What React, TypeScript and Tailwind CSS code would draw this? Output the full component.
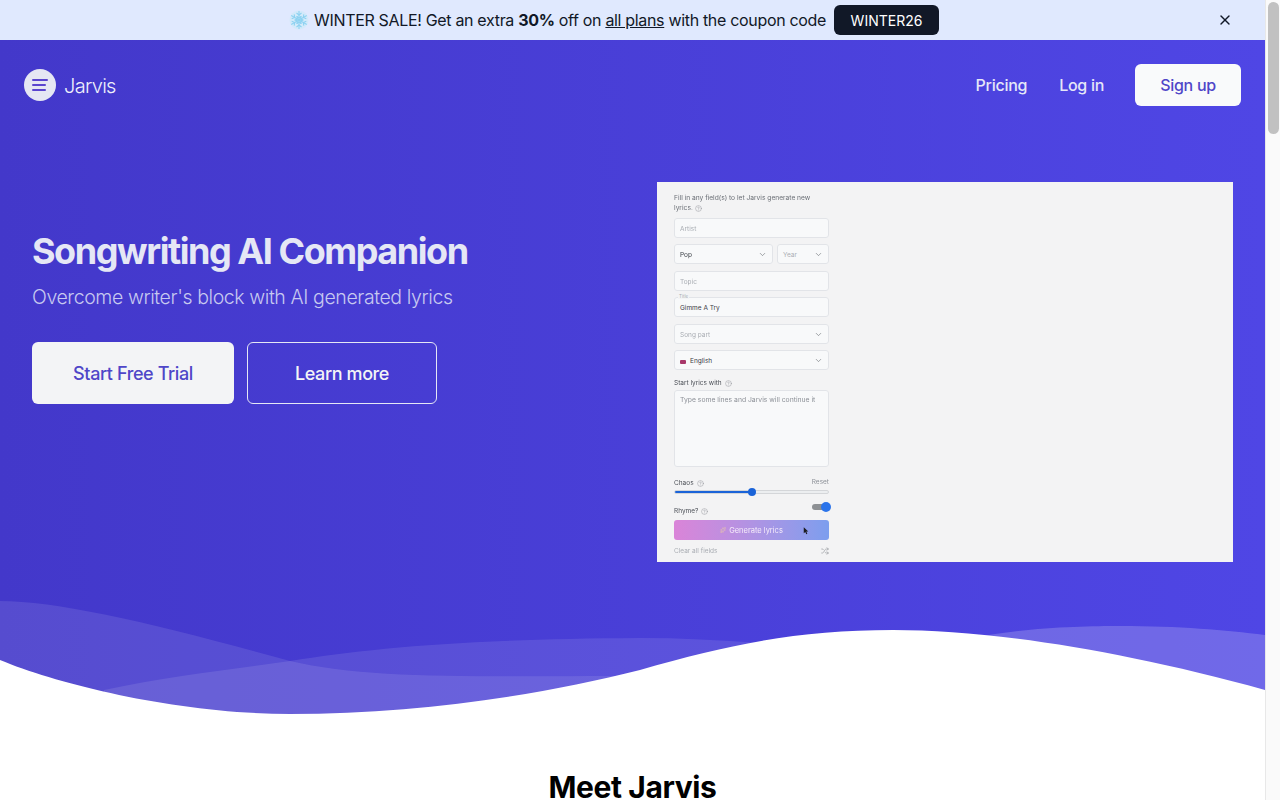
import { ChevronDown, CircleHelp, Shuffle, Sparkles, X } from "lucide-react";

const INTER = "font-['Inter',sans-serif]";

function Snowflake() {
  const arms = [0, 60, 120, 180, 240, 300];
  return (
    <svg width="20" height="20" viewBox="0 0 20 20" className="shrink-0">
      <circle cx="10" cy="10" r="9.5" fill="#cdeaf8" opacity="0.7" />
      {arms.map((a) => (
        <g key={a} transform={`rotate(${a} 10 10)`} stroke="#8dd2f1" strokeWidth="1.1" fill="none">
          <path d="M10 10V1" />
          <path d="M7.5 3 10 5l2.5-2" />
          <path d="M7.5 6.5 10 8l2.5-1.500" />
        </g>
      ))}
    </svg>
  );
}

function Help() {
  return <CircleHelp className="inline-block h-[7px] w-[7px] text-[#8b8f96]" strokeWidth={1.5} />;
}

function Field(props: { text: string; muted?: boolean; chevron?: boolean; className?: string }) {
  return (
    <div
      className={`flex h-5 items-center justify-between rounded-[3px] border border-[#e2e4e8] bg-[#f8f9fa] px-[5px] text-[6.500px] ${
        props.muted ? "text-[#a9adb3]" : "text-[#3c4047]"
      } ${props.className ?? ""}`}
    >
      <span className="mt-[4px]">{props.text}</span>
      {props.chevron && <ChevronDown className="h-[9px] w-[9px] text-[#5f6369]" strokeWidth={1.5} />}
    </div>
  );
}

function LyricsForm() {
  return (
    <div className="flex h-[380px] w-[576px] shrink-0 flex-col bg-[#f3f3f4] pl-[17px] pt-[11px]">
      <div className="flex w-[155px] flex-col blur-[0.3px]">
        <p className="w-[145px] text-[6.650px] leading-[10px] text-[#6b6f76]">
          Fill in any field(s) to let Jarvis generate new lyrics. <Help />
        </p>
        <Field text="Artist" muted className="mt-[5px]" />
        <div className="mt-[6px] flex gap-1">
          <Field text="Pop" chevron className="w-[99px]" />
          <Field text="Year" muted chevron className="flex-1" />
        </div>
        <Field text="Topic" muted className="mt-[7px]" />
        <div className="relative mt-[6px]">
          <span className="absolute left-[4px] top-[-3px] bg-[#f3f4f5] px-[1px] text-[4.500px] leading-[5px] text-[#a9adb3]">
            Title
          </span>
          <Field text="Gimme A Try" />
        </div>
        <Field text="Song part" muted chevron className="mt-[7px]" />
        <div className="mt-[6px] flex h-5 items-center justify-between rounded-[3px] border border-[#e2e4e8] bg-[#f8f9fa] px-[5px] text-[6.500px] text-[#3c4047]">
          <span className="mt-[3px] flex items-center gap-[4px]">
            <span className="h-[4px] w-[6px] rounded-[1px] bg-[#a8386a]" />
            English
          </span>
          <ChevronDown className="h-[9px] w-[9px] text-[#5f6369]" strokeWidth={1.5} />
        </div>
        <p className="mt-[8px] flex items-center gap-[3px] text-[6.500px] leading-[10px] text-[#4b4f56]">
          Start lyrics with <Help />
        </p>
        <div className="mt-[2px] h-[77px] rounded-[3px] border border-[#e2e4e8] bg-[#f8f9fa] px-[5px] pt-[4px] text-[6.800px] leading-[10px] text-[#8d9198]">
          Type some lines and Jarvis will continue it
        </div>
        <div className="mt-[10px] flex items-start justify-between text-[6.500px] leading-[10px]">
          <span className="mt-[1px] flex items-center gap-[3px] text-[#4b4f56]">
            Chaos <Help />
          </span>
          <span className="text-[#8d9198]">Reset</span>
        </div>
        <div className="relative mt-[2px] h-[4px] rounded-full border border-[#d4d6d9] bg-[#eceef0]">
          <div className="h-full w-1/2 rounded-full bg-[#1a63d8]" />
          <div className="absolute left-[73px] top-[-3px] h-2 w-2 rounded-full bg-[#1a63d8]" />
        </div>
        <div className="mt-[10px] flex h-[16px] items-start justify-between text-[6.500px] leading-[10px]">
          <span className="mt-[2px] flex items-center gap-[3px] text-[#4b4f56]">
            Rhyme? <Help />
          </span>
          <div className="relative mr-[1px] h-[6px] w-[16px] rounded-full bg-[#8d9094]">
            <div className="absolute right-[-3px] top-[-2px] h-[10px] w-[10px] rounded-full bg-[#2b74ea]" />
          </div>
        </div>
        <div className="relative flex h-5 items-center justify-center gap-[3px] rounded-[3px] bg-gradient-to-r from-[#da84d8] to-[#7c9eee] text-[7.500px] text-[#f6ecfa]">
          <Sparkles className="h-[6px] w-[6px] text-[#f3d9a0]" strokeWidth={1.5} />
          <span className="mt-[2px]">Generate lyrics</span>
          <svg viewBox="0 0 8 10" className="absolute left-[129px] top-[7px] h-[8px] w-[6px]">
            <path d="M1 0v8l2-1.800 1.500 3 1.300-.600L4.400 5.800H7z" fill="#1b1b1f" />
          </svg>
        </div>
        <div className="mt-[6px] flex items-center justify-between text-[6.500px] leading-[10px] text-[#a9adb3]">
          Clear all fields
          <Shuffle className="h-2 w-2 text-[#7b7f85]" strokeWidth={1.5} />
        </div>
      </div>
    </div>
  );
}

function Wave() {
  return (
    <svg
      viewBox="0 0 1265 120"
      preserveAspectRatio="none"
      className="absolute bottom-0 left-0 h-[120px] w-full"
    >
      {/* y here is page y minus 600 */}
      <path
        d="M0 1C60 1 160 25 290 61C370 80 480 76 640 76C780 76 900 50 995 34C1040 27 1090 26 1120 26C1180 26 1225 30 1265 35V120H0Z"
        fill="#ffffff"
        fillOpacity="0.1"
      />
      <path
        d="M104 90C170 76 230 70 290 61C370 48 470 39 640 38C680 38 720 40 760 43C850 50 950 40 995 34C1040 27 1090 26 1120 26C1180 26 1225 30 1265 35V120H104Z"
        fill="#ffffff"
        fillOpacity="0.1"
      />
      <path
        d="M0 60C60 85 180 114 290 114C420 114 540 95 640 70C730 44 800 30 893 30C990 30 1120 50 1265 90V120H0Z"
        fill="#ffffff"
      />
    </svg>
  );
}

export default function App() {
  return (
    <div className={`flex h-screen w-full overflow-hidden bg-white ${INTER}`}>
      <div className="min-w-0 flex-1">
        <div className="flex h-10 items-center bg-[#e0e9fe] pl-[289px] text-[16px] tracking-[-0.325px] text-[#111827]">
          <Snowflake />
          <span className="ml-[5px]">
            WINTER SALE! Get an extra <b className="font-bold">30%</b> off on{" "}
            <span className="underline">all plans</span> with the coupon code
          </span>
          <span className="ml-2 flex h-[30px] w-[105px] items-center justify-center rounded-md bg-[#111827] text-[14px] tracking-normal text-white">
            WINTER26
          </span>
          <X className="ml-[278px] h-4 w-4 text-[#111827]" strokeWidth={2} />
        </div>

        <div className="relative h-[680px] bg-gradient-to-r from-[#4338ca] to-[#4f46e5]">
          <header className="flex items-center justify-between pl-6 pr-6 pt-6">
            <div className="flex items-center gap-2">
              <div className="flex h-8 w-8 flex-col items-center justify-center gap-[3px] rounded-full bg-[#e5e7f3]">
                <span className="h-[2px] w-4 rounded-full bg-[#5a45cf]" />
                <span className="ml-[-2px] h-[2px] w-[14px] rounded-full bg-[#5a45cf]" />
                <span className="ml-[-2px] h-[2px] w-[14px] rounded-full bg-[#5a45cf]" />
              </div>
              <span className="mt-[1px] text-[20px] font-light tracking-[-0.7px] text-[#eef0fb]">Jarvis</span>
            </div>
            <nav className="flex items-center text-[16px] font-medium tracking-[-0.28px] text-[#e5e7f8]">
              <span>Pricing</span>
              <span className="ml-8">Log in</span>
              <span className="ml-[31px] flex h-[42px] w-[106px] items-center justify-center rounded-md bg-[#f9fafb] text-[#4f46c8]">
                Sign up
              </span>
            </nav>
          </header>

          <section className="mt-[76px] flex items-start pl-8">
            <div className="w-[625px] shrink-0 pt-[47px]">
              <h1 className="text-[36px] font-bold leading-[44px] tracking-[-1.45px] text-[#e5e7f5]">
                Songwriting AI Companion
              </h1>
              <p className="mt-[10px] text-[19.500px] font-light leading-[28px] tracking-[-0.4px] text-[#c7c9f0]">
                Overcome writer's block with AI generated lyrics
              </p>
              <div className="mt-[31px] flex gap-[13px]">
                <span className="flex h-[62px] w-[202px] items-center justify-center rounded-md bg-[#f3f4f6] text-[18px] font-medium tracking-[-0.4px] text-[#4f46c8]">
                  Start Free Trial
                </span>
                <span className="flex h-[62px] w-[190px] items-center justify-center rounded-md border border-[#e5e7f5] text-[18px] font-medium tracking-[-0.4px] text-[#f3f4f6]">
                  Learn more
                </span>
              </div>
            </div>
            <LyricsForm />
          </section>

          <Wave />
        </div>

        <h2 className="mt-[49px] text-center text-[30px] font-bold leading-[36px] tracking-[-0.4px] text-black">
          Meet Jarvis
        </h2>
      </div>

      {/* scrollbar */}
      <div className="w-[15px] shrink-0 border-l border-[#e8e8e8] bg-[#fafafa] pl-[2px] pt-[2px]">
        <div className="h-[132px] w-[11px] rounded-full bg-[#c1c1c1]" />
      </div>
    </div>
  );
}
